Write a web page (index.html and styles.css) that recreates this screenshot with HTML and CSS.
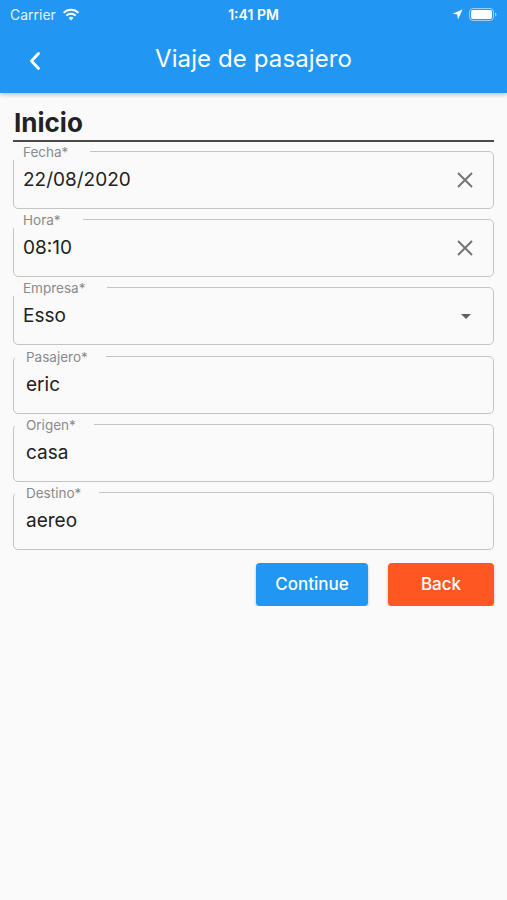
FILE: index.html
```html
<!DOCTYPE html>
<html lang="es">
<head>
<meta charset="utf-8">
<link rel="stylesheet" href="styles.css">
</head>
<body>
<header class="appbar">
  <div class="status">
    <div class="status-left">
      <span class="carrier">Carrier</span>
      <svg class="wifi" width="18" height="13" viewBox="0 0 18 13"><path d="M9 12.5 L6.6 9.9 A3.4 3.4 0 0 1 11.4 9.9 Z" fill="#fff"/><path d="M4.3 7.6 A6.6 6.6 0 0 1 13.7 7.6" stroke="#fff" stroke-width="2" fill="none"/><path d="M1.6 4.9 A10.4 10.4 0 0 1 16.4 4.9" stroke="#fff" stroke-width="2" fill="none"/></svg>
    </div>
    <div class="time">1:41 PM</div>
    <div class="status-right">
      <svg width="11" height="11" viewBox="0 0 11 11"><path d="M10.5 0.5 L0.5 4.8 L5.2 5.6 L6 10.5 Z" fill="#fff"/></svg>
      <svg width="28" height="13" viewBox="0 0 28 13"><rect x="0.5" y="0.5" width="24" height="12" rx="3.5" fill="none" stroke="rgba(255,255,255,0.55)"/><rect x="2" y="2" width="21" height="9" rx="2" fill="#fff"/><path d="M26 4.5 a1.5 2 0 0 1 0 4 z" fill="rgba(255,255,255,0.55)"/></svg>
    </div>
  </div>
  <div class="toolbar">
    <svg class="back" width="14" height="20" viewBox="0 0 14 20"><path d="M10.5 2.5 L3.5 10 L10.5 17.5" stroke="#fff" stroke-width="2.8" fill="none" stroke-linecap="round" stroke-linejoin="round"/></svg>
    <h1 class="title">Viaje de pasajero</h1>
  </div>
</header>

<main class="content">
  <h2 class="section">Inicio</h2>

  <div class="fields">
    <div class="field">
      <span class="label">Fecha*</span>
      <span class="value">22/08/2020</span>
      <svg class="icon-x" width="18" height="18" viewBox="0 0 18 18"><path d="M2 2 L16 16 M16 2 L2 16" stroke="#757575" stroke-width="2"/></svg>
    </div>
    <div class="field">
      <span class="label">Hora*</span>
      <span class="value">08:10</span>
      <svg class="icon-x" width="18" height="18" viewBox="0 0 18 18"><path d="M2 2 L16 16 M16 2 L2 16" stroke="#757575" stroke-width="2"/></svg>
    </div>
    <div class="field">
      <span class="label">Empresa*</span>
      <span class="value">Esso</span>
      <svg class="icon-drop" width="10" height="5" viewBox="0 0 10 5"><path d="M0 0 L10 0 L5 5 Z" fill="#616161"/></svg>
    </div>
    <div class="field field-text">
      <span class="label">Pasajero*</span>
      <span class="value">eric</span>
    </div>
    <div class="field field-text">
      <span class="label">Origen*</span>
      <span class="value">casa</span>
    </div>
    <div class="field field-text">
      <span class="label">Destino*</span>
      <span class="value">aereo</span>
    </div>
  </div>

  <div class="actions">
    <button class="btn btn-continue">Continue</button>
    <button class="btn btn-back">Back</button>
  </div>
</main>
</body>
</html>
```

FILE: styles.css
```css
* { box-sizing: border-box; }
html, body {
  margin: 0;
  padding: 0;
  background: #fafafa;
  font-family: Inter, Roboto, "Noto Sans", "Liberation Sans", sans-serif;
}
.appbar {
  background: #2196f3;
  height: 93px;
  color: #fff;
  box-shadow: 0 2px 4px rgba(0,0,0,0.22);
}
.status {
  height: 28px;
  display: grid;
  grid-template-columns: 1fr auto 1fr;
  align-items: center;
  padding: 0 10px;
}
.status-left {
  display: flex;
  align-items: center;
  gap: 6px;
}
.carrier {
  font-size: 14px;
  color: rgba(255,255,255,0.9);
}
.time {
  font-size: 14px;
  font-weight: 600;
}
.status-right {
  display: flex;
  justify-content: flex-end;
  align-items: center;
  gap: 6px;
}
.toolbar {
  height: 65px;
  display: flex;
  align-items: center;
  position: relative;
  padding-left: 28px;
}
.back { display: block; margin-top: 0; }
.title {
  margin: 0;
  position: absolute;
  left: 0;
  right: 0;
  top: 16px;
  text-align: center;
  font-size: 24px;
  font-weight: 400;
  line-height: 30px;
  letter-spacing: 0.1px;
  pointer-events: none;
}
.content {
  padding: 0 13px;
}
.section {
  margin: 15px 0 0;
  font-size: 26px;
  font-weight: 700;
  line-height: 29px;
  color: #222;
  padding-bottom: 3px;
  padding-left: 1px;
  border-bottom: 2px solid #4a4a4a;
}
.fields {
  display: flex;
  flex-direction: column;
  gap: 10.2px;
  margin-top: 9px;
}
.field {
  position: relative;
  height: 58px;
  border: 1.5px solid #c4c4c4;
  border-radius: 5px;
  padding: 16px 0 0 9px;
  display: flex;
  align-items: flex-start;
}
.field-text { padding-left: 12px; }
.label {
  position: absolute;
  top: -7px;
  left: -2px;
  background: #fafafa;
  padding: 0 22px 0 11px;
  font-size: 13.5px;
  line-height: 15px;
  color: #8a8a8a;
}
.field-text .label { left: 1px; padding-right: 18px; }
.value {
  font-size: 19px;
  line-height: 23px;
  color: #212121;
  flex: 1;
}
.icon-x {
  margin-right: 19px;
  margin-top: 3px;
}
.icon-drop {
  margin-right: 22px;
  margin-top: 10px;
}
.actions {
  display: flex;
  justify-content: flex-end;
  gap: 20px;
  margin-top: 13px;
}
.btn {
  height: 43px;
  border: none;
  border-radius: 4px;
  color: #fff;
  font-family: inherit;
  font-size: 17px;
  font-weight: 500;
  box-shadow: 0 2px 3px rgba(0,0,0,0.25);
}
.btn-continue { width: 112px; background: #2196f3; }
.btn-back { width: 106px; background: #ff5722; }
```
